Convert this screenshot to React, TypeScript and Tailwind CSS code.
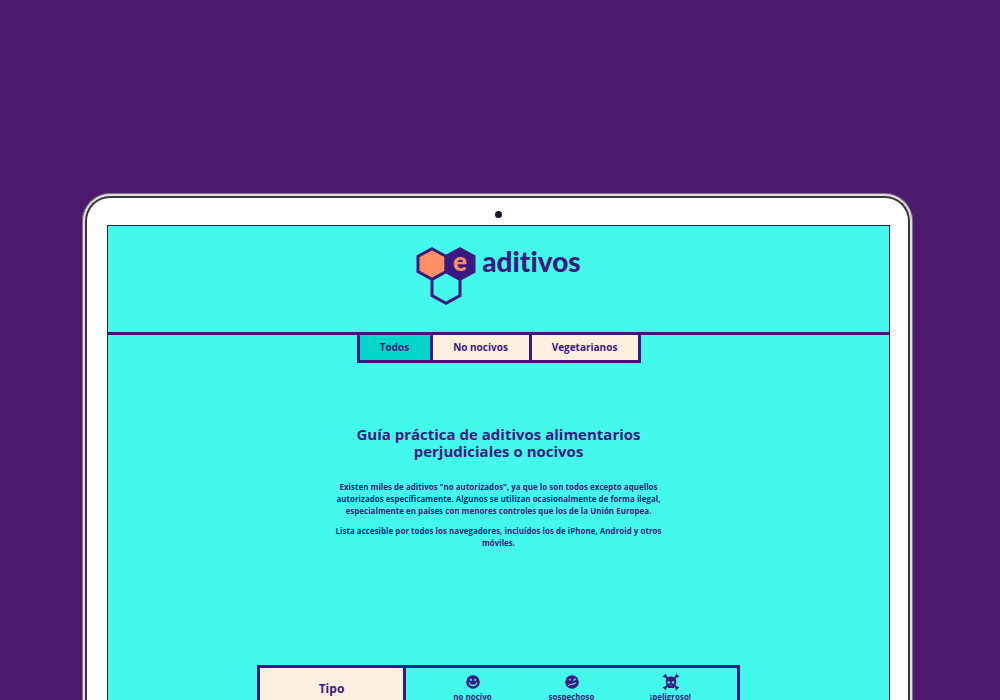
import type { ReactNode } from 'react';

const tabs = [
  { label: 'Todos', style: 'w-[70px] bg-[#05d6ca]' },
  { label: 'No nocivos', style: 'w-[99px] border-l-3 bg-[#ffefdf]' },
  { label: 'Vegetarianos', style: 'w-[109px] border-l-3 bg-[#ffefdf]' },
];

function Logo() {
  return (
    <svg viewBox="0 0 60 60" className="h-[60px] w-[60px]" aria-hidden="true">
      <g stroke="#3a1a80" strokeWidth="3" strokeLinejoin="miter">
        <path d="M30 25.5 44 33.3V49.5L30 57.3 16 49.5V33.3Z" fill="none" />
        <path d="M16 2.7 30 10.3V25.5L16 33.3 2 25.5V10.3Z" fill="#ff8f66" />
        <path d="M44 2.7 58 10.3V25.5L44 33.3 30 25.5V10.3Z" fill="#3a1a80" />
      </g>
      <text
        x="44"
        y="25"
        textAnchor="middle"
        fontSize="26"
        fontWeight="900"
        fill="#ff8f66"
        fontFamily="Lato, sans-serif"
      >
        e
      </text>
    </svg>
  );
}

function Smile() {
  return (
    <svg viewBox="0 0 14 14" className="size-[14px]" aria-hidden="true">
      <circle cx="7" cy="7" r="6.8" fill="#3a1a80" />
      <g fill="#43f9ec">
        <ellipse cx="4.9" cy="4.8" rx="0.9" ry="1.4" />
        <ellipse cx="9.1" cy="4.8" rx="0.9" ry="1.4" />
        <path d="M2.5 7.6H3.6C4.6 10.5 9.4 10.5 10.4 7.6H11.5C10.6 12.4 3.4 12.4 2.5 7.6Z" />
      </g>
    </svg>
  );
}

function Doubt() {
  return (
    <svg viewBox="0 0 14 14" className="size-[14px]" aria-hidden="true">
      <circle cx="7" cy="7" r="6.8" fill="#3a1a80" />
      <g fill="none" stroke="#43f9ec" strokeWidth="1.2" strokeLinecap="round">
        <path d="M4.4 4.6 5.6 5M8.8 5.3 10.4 4.1" />
        <path d="M4 10.6C5 8.4 6.6 9.6 7.8 9.2 9 8.8 9.6 8 10.6 8" />
      </g>
    </svg>
  );
}

function Skull() {
  return (
    <svg viewBox="0 0 18 18" className="h-[18px] w-[18px]" aria-hidden="true">
      <g fill="#3a1a80">
        <path d="M.6 3.8 3.8.6 5 3.4 7 5.4 5.4 7 3.5 4.8ZM17.4 3.8 14.2.6 13 3.4 11 5.4 12.6 7 14.5 4.8ZM.6 14.2 3.8 17.4 5 14.6 7 12.6 5.4 11 3.5 13.2ZM17.4 14.2 14.2 17.4 13 14.6 11 12.6 12.6 11 14.5 13.2Z" />
        <path d="M9 3.4C5.4 3.4 3.6 5.9 3.6 8.7 3.6 10.9 4.6 12 6 12.8V15H12V12.8C13.4 12 14.4 10.9 14.4 8.7 14.4 5.9 12.6 3.4 9 3.4Z" />
      </g>
      <g fill="#43f9ec">
        <circle cx="6.9" cy="9.4" r="1.2" />
        <circle cx="11.1" cy="9.4" r="1.2" />
        <path d="M9 11 9.7 12.2H8.3Z" />
      </g>
    </svg>
  );
}

function Level({ icon, label, className }: { icon: ReactNode; label: string; className: string }) {
  return (
    <th scope="col" className={`p-0 pt-[5px] align-top ${className}`}>
      <span className="flex h-[18px] items-center justify-center">{icon}</span>
      <span className="block text-[8px] leading-3 font-bold">{label}</span>
    </th>
  );
}

export default function App() {
  return (
    <div className="h-screen overflow-hidden bg-[#4e1a6e] pt-[193px] pr-[87px] pl-[82px] font-['Open_Sans','Noto_Sans',sans-serif] text-[#3a1a80]">
      <div className="rounded-t-[28px] border-x border-t border-[#85748f] bg-[#85748f]">
        <div className="rounded-t-[27px] border-x-2 border-t-2 border-[#e0dee0] bg-[#e0dee0]">
          <div className="rounded-t-[25px] border-x-2 border-t-2 border-[#383838] bg-white pr-[18px] pl-5">
            <div className="flex h-[27px] items-center justify-center pt-[6px]">
              <span className="size-[7px] rounded-full bg-[#101828]" />
            </div>
            <div className="border-x border-t border-[#0b2b35] bg-[#43f9ec]">
              <header className="flex h-[109px] items-start justify-center border-b-3 border-[#3a1a80] pt-5">
                <a href="#inicio" className="flex items-start gap-[6px]">
                  <Logo />
                  <span className="font-['Lato',sans-serif] text-[28px] leading-[30px] font-black [font-variant-ligatures:none]">
                    aditivos
                  </span>
                </a>
              </header>
              <nav className="flex justify-center">
                <div className="flex border-x-3 border-b-3 border-[#3a1a80]">
                  {tabs.map((tab) => (
                    <button
                      key={tab.label}
                      type="button"
                      className={`h-[25px] border-[#3a1a80] text-[10px] font-bold ${tab.style}`}
                    >
                      {tab.label}
                    </button>
                  ))}
                </div>
              </nav>
              <main className="pt-[63px] text-center">
                <h1 className="text-[15px] leading-[17px] font-bold">
                  Guía práctica de aditivos alimentarios
                  <br />
                  perjudiciales o nocivos
                </h1>
                <div className="mt-[21px] flex flex-col gap-2 text-[8px] leading-3 font-bold">
                  <p>
                    Existen miles de aditivos "no autorizados", ya que lo son todos excepto aquellos
                    <br />
                    autorizados específicamente. Algunos se utilizan ocasionalmente de forma ilegal,
                    <br />
                    especialmente en países con menores controles que los de la Unión Europea.
                  </p>
                  <p>
                    Lista accesible por todos los navegadores, incluídos los de iPhone, Android y otros
                    <br />
                    móviles.
                  </p>
                </div>
                <table className="mx-auto mt-[116px] w-[483px] table-fixed border-separate border-spacing-0 border-3 border-[#3a1a80]">
                  <thead>
                    <tr className="h-[42px]">
                      <th
                        scope="col"
                        className="w-[146px] border-r-3 border-[#3a1a80] bg-[#ffefdf] p-0 text-[12px] font-bold"
                      >
                        Tipo
                      </th>
                      <Level icon={<Smile />} label="no nocivo" className="w-[116px] pl-[17px]" />
                      <Level icon={<Doubt />} label="sospechoso" className="w-[99px]" />
                      <Level icon={<Skull />} label="¡peligroso!" className="pr-[17px]" />
                    </tr>
                  </thead>
                </table>
              </main>
            </div>
          </div>
        </div>
      </div>
    </div>
  );
}
